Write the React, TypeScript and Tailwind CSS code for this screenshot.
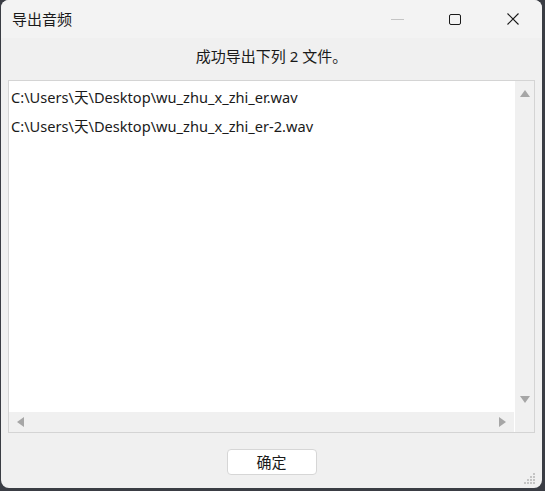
import React from "react";

const files = [
  "C:\\Users\\天\\Desktop\\wu_zhu_x_zhi_er.wav",
  "C:\\Users\\天\\Desktop\\wu_zhu_x_zhi_er-2.wav",
];

const font = { fontFamily: '"Noto Sans", "Noto Sans CJK SC", sans-serif' };

function App() {
  return (
    <div className="w-[545px] h-[491px] bg-[#3a3d44] overflow-hidden" style={font}>
      <div className="ml-[1px] w-[541px] h-[488px] bg-[#f0f0f0] rounded-lg flex flex-col overflow-hidden text-[#1a1a1a]">
        {/* title bar */}
        <div className="h-[38px] bg-[#f3f3f3] flex items-center shrink-0">
          <span className="ml-[11px] text-[15px]">导出音频</span>
          <div className="ml-auto flex items-center h-full">
            <div className="w-[46px] h-full flex items-center justify-center">
              <div className="w-[13px] h-px bg-[#c4c4c4] mr-[12px]" />
            </div>
            <div className="w-[58px] h-full flex items-center justify-center">
              <div className="w-[12px] h-[11px] border border-[#1a1a1a] rounded-[2px]" />
            </div>
            <div className="w-[58px] h-full flex items-center justify-center">
              <svg width="12" height="12" viewBox="0 0 12 12">
                <path d="M0.5 0.5 L11.5 11.5 M11.5 0.5 L0.5 11.5" stroke="#1a1a1a" strokeWidth="1.1" />
              </svg>
            </div>
          </div>
        </div>

        {/* message */}
        <div className="h-[42px] pb-[5px] flex items-center justify-center text-[15px] shrink-0">
          成功导出下列 2 文件。
        </div>

        {/* list */}
        <div className="mx-[7px] h-[353px] border border-[#d4d4d4] bg-white flex flex-col shrink-0">
          <div className="flex flex-1 min-h-0">
            <div className="flex-1 pl-[2px] pt-[2px] text-[14.6px]">
              {files.map((f) => (
                <div key={f} className="h-[29px] leading-[29px] whitespace-nowrap">
                  {f}
                </div>
              ))}
            </div>
            <div className="w-[19px] bg-[#f0f0f0] flex flex-col items-center justify-between py-[9px]">
              <svg width="10" height="7" viewBox="0 0 10 7">
                <path d="M0 7 L5 0 L10 7 Z" fill="#a6a6a6" />
              </svg>
              <svg width="10" height="7" viewBox="0 0 10 7">
                <path d="M0 0 L5 7 L10 0 Z" fill="#a6a6a6" />
              </svg>
            </div>
          </div>
          <div className="h-[20px] flex shrink-0">
            <div className="flex-1 bg-[#f0f0f0] flex items-center justify-between px-[8px]">
              <svg width="7" height="10" viewBox="0 0 7 10">
                <path d="M7 0 L0 5 L7 10 Z" fill="#a6a6a6" />
              </svg>
              <svg width="7" height="10" viewBox="0 0 7 10">
                <path d="M0 0 L7 5 L0 10 Z" fill="#a6a6a6" />
              </svg>
            </div>
            <div className="w-[19px] ml-px bg-[#f0f0f0]" />
          </div>
        </div>

        {/* footer */}
        <div className="flex-1 relative flex items-center justify-center">
          <button className="w-[90px] h-[26px] bg-white border border-[#d6d6d6] rounded-[4px] text-[15px] mt-[3px]">
            确定
          </button>
          <svg className="absolute right-[6px] bottom-[3px]" width="12" height="12" viewBox="0 0 12 12">
            <g fill="#c4c4c4">
              <rect x="9" y="0" width="2" height="2" />
              <rect x="6" y="3" width="2" height="2" />
              <rect x="9" y="3" width="2" height="2" />
              <rect x="3" y="6" width="2" height="2" />
              <rect x="6" y="6" width="2" height="2" />
              <rect x="9" y="6" width="2" height="2" />
              <rect x="0" y="9" width="2" height="2" />
              <rect x="3" y="9" width="2" height="2" />
              <rect x="6" y="9" width="2" height="2" />
              <rect x="9" y="9" width="2" height="2" />
            </g>
          </svg>
        </div>
      </div>
    </div>
  );
}

export default App;
